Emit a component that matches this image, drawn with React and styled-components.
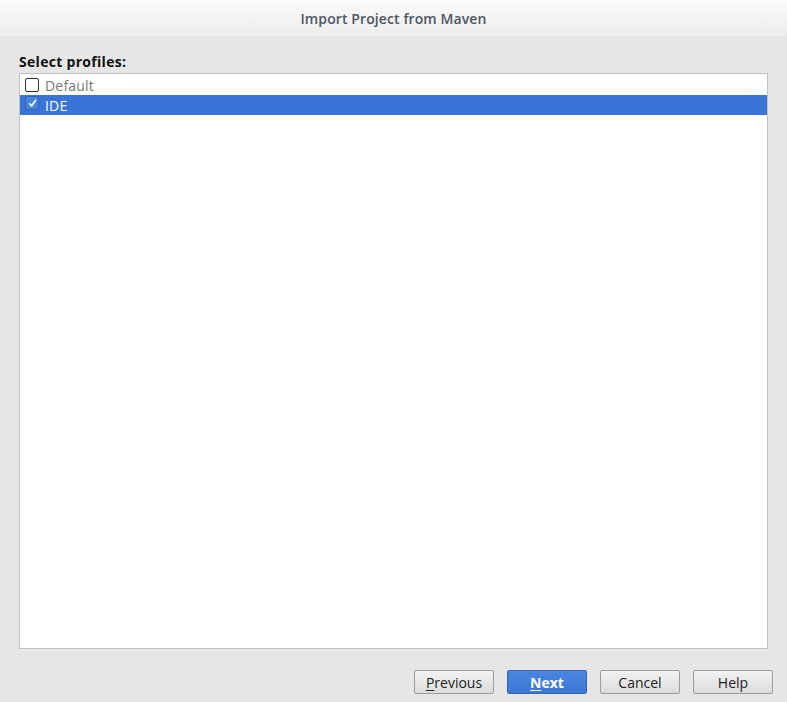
import React, { useState } from 'react';
import styled, { createGlobalStyle } from 'styled-components';

const GlobalStyle = createGlobalStyle`
  html, body {
    margin: 0;
    padding: 0;
    background: #e6e6e6;
  }
  body {
    font-family: "Open Sans", "DejaVu Sans", sans-serif;
  }
`;

const Window = styled.div`
  width: 787px;
  height: 702px;
  display: flex;
  flex-direction: column;
  background: #e6e6e6;
  overflow: hidden;
`;

const TitleBar = styled.div`
  height: 36px;
  flex-shrink: 0;
  display: flex;
  align-items: center;
  justify-content: center;
  background: linear-gradient(#fbfbfb, #ececec);
  color: #4c5661;
  font-size: 14px;
  font-weight: 600;
  letter-spacing: 0.1px;
`;

const Body = styled.div`
  flex: 1;
  display: flex;
  flex-direction: column;
  padding-top: 16px;
`;

const Label = styled.div`
  margin: 0 19px;
  font-size: 14px;
  font-weight: 700;
  color: #111;
  letter-spacing: 0.3px;
  line-height: 19px;
  height: 21px;
`;

const List = styled.div`
  margin: 0 19px;
  height: 573px;
  background: #fff;
  border: 1px solid #c2c2c2;
  padding-top: 1px;
`;

const Row = styled.div`
  height: 20px;
  display: flex;
  align-items: center;
  padding-left: 5px;
  gap: 6px;
  background: ${p => (p.selected ? '#3875d7' : 'transparent')};
  color: ${p => (p.selected ? '#fff' : '#777')};
  font-size: 14px;
  letter-spacing: 0.2px;
  cursor: default;
`;

const Box = styled.span`
  width: 14px;
  height: 14px;
  box-sizing: border-box;
  border-radius: 2px;
  border: 1px solid ${p => (p.checked ? '#2f64b9' : '#333')};
  background: ${p => (p.checked ? '#4784e0' : '#fff')};
  display: flex;
  align-items: center;
  justify-content: center;
  margin-top: ${p => (p.checked ? '-4px' : '0')};
`;

const Footer = styled.div`
  display: flex;
  justify-content: flex-end;
  gap: 13px;
  padding: 21px 14px 0 0;
`;

const Button = styled.button`
  width: 80px;
  height: 24px;
  box-sizing: border-box;
  border-radius: 2px;
  border: 1px solid ${p => (p.primary ? '#3566b8' : '#9c9c9c')};
  background: ${p =>
    p.primary
      ? 'linear-gradient(#4a86e0, #3c77d6)'
      : 'linear-gradient(#f2f2f2, #dcdcdc)'};
  color: ${p => (p.primary ? '#fff' : '#222')};
  font-family: "Open Sans", "DejaVu Sans", sans-serif;
  font-size: 14px;
  font-weight: ${p => (p.primary ? 700 : 400)};
  padding: 0;
  display: flex;
  align-items: center;
  justify-content: center;

  u {
    text-decoration-thickness: 1px;
    text-underline-offset: 2px;
  }
`;

function Check() {
  return (
    <svg width="9" height="9" viewBox="0 0 9 9">
      <path d="M1.5 4.8 L3.6 7 L7.6 1.2" fill="none" stroke="#fff" strokeWidth="1.6" strokeLinecap="round" strokeLinejoin="round" />
    </svg>
  );
}

export default function App() {
  const [profiles, setProfiles] = useState([
    { name: 'Default', checked: false },
    { name: 'IDE', checked: true },
  ]);
  const [selected, setSelected] = useState(1);

  const toggle = i => {
    setProfiles(ps => ps.map((p, j) => (j === i ? { ...p, checked: !p.checked } : p)));
  };

  return (
    <Window>
      <GlobalStyle />
      <TitleBar>Import Project from Maven</TitleBar>
      <Body>
        <Label>Select profiles:</Label>
        <List>
          {profiles.map((p, i) => (
            <Row key={p.name} selected={selected === i} onClick={() => setSelected(i)}>
              <Box checked={p.checked} onClick={() => toggle(i)}>
                {p.checked && <Check />}
              </Box>
              {p.name}
            </Row>
          ))}
        </List>
        <Footer>
          <Button><span><u>P</u>revious</span></Button>
          <Button primary><span><u>N</u>ext</span></Button>
          <Button>Cancel</Button>
          <Button>Help</Button>
        </Footer>
      </Body>
    </Window>
  );
}
